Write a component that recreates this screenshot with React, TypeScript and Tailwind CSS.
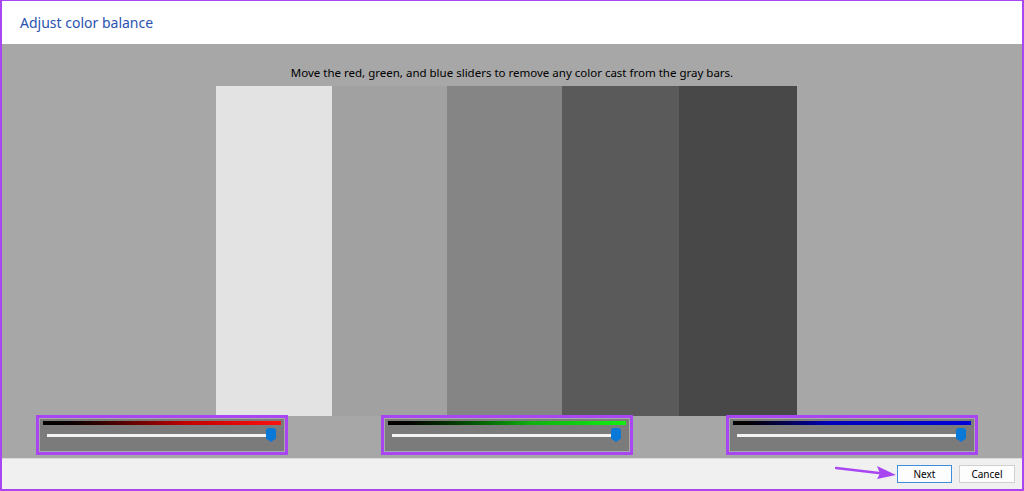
import React from "react";

const bars = ["bg-[#e3e3e3]", "bg-[#a1a1a1]", "bg-[#858585]", "bg-[#5a5a5a]", "bg-[#484848]"];

function ColorSlider({ line }: { line: string }) {
  return (
    <div className="h-[40px] w-[252px] border-[3px] border-[#a846f2] bg-[#a9a9a9] p-px">
      <div className="flex h-full w-full flex-col bg-[#7b7b7b] px-[3px] pt-[2px]">
        <div className={`h-[4px] w-full ${line}`} />
        <div className="relative mt-[9px] h-[3px] ml-[4px] mr-[10px] bg-[#f2f2f2]">
          <div className="absolute right-[-5px] top-[-6px] h-[14px] w-[10px] rounded-t-[3px] bg-[#0a78d7] [clip-path:polygon(0_0,100%_0,100%_75%,50%_100%,0_75%)]" />
        </div>
      </div>
    </div>
  );
}

export default function App() {
  return (
    <div
      className="relative flex h-[491px] w-[1024px] flex-col border-2 border-t border-[#a846f2] bg-white"
      style={{ fontFamily: '"Noto Sans", "Open Sans", sans-serif' }}
    >
      <header className="flex h-[43px] items-center pl-[18px]">
        <h1 className="text-[14px] text-[#2a52b0]">Adjust color balance</h1>
      </header>
      <main className="flex h-[414px] flex-col bg-[#a7a7a7]">
        <p className="mt-[21px] text-center text-[11.5px] leading-[16px] text-black">
          Move the red, green, and blue sliders to remove any color cast from the gray bars.
        </p>
        <div className="mt-[5px] ml-[214px] flex h-[330px] w-[581px]">
          <div className={`w-[116px] ${bars[0]}`} />
          <div className={`w-[115px] ${bars[1]}`} />
          <div className={`w-[115px] ${bars[2]}`} />
          <div className={`w-[117px] ${bars[3]}`} />
          <div className={`w-[118px] ${bars[4]}`} />
        </div>
        <div className="-mt-px flex gap-[93px] pl-[34px]">
          <ColorSlider line="bg-gradient-to-r from-black via-[#c00000] via-60% to-[#ff1010]" />
          <ColorSlider line="bg-gradient-to-r from-black via-[#10b010] via-60% to-[#10f010]" />
          <ColorSlider line="bg-gradient-to-r from-black via-[#0000b8] via-40% to-[#0000d8]" />
        </div>
      </main>
      <footer className="flex flex-1 items-center justify-end gap-[7px] border-t border-[#dcdcdc] bg-[#f0f0f0] pr-[7px]">
        <button className="h-[18px] w-[55px] border border-[#3c8ddb] bg-[#fdfdfd] text-[10px] leading-none text-black">
          Next
        </button>
        <button className="h-[18px] w-[56px] border border-[#d0d0d0] bg-[#fdfdfd] text-[10px] leading-none text-black">
          Cancel
        </button>
      </footer>
      <svg className="absolute left-[833px] top-[464px]" width="62" height="14" viewBox="0 0 62 14">
        <line x1="1" y1="3" x2="48" y2="8.5" stroke="#a846f2" strokeWidth="2.5" strokeLinecap="round" />
        <polygon points="61,10 42,1 45,8.5 42,14" fill="#a846f2" />
      </svg>
    </div>
  );
}
